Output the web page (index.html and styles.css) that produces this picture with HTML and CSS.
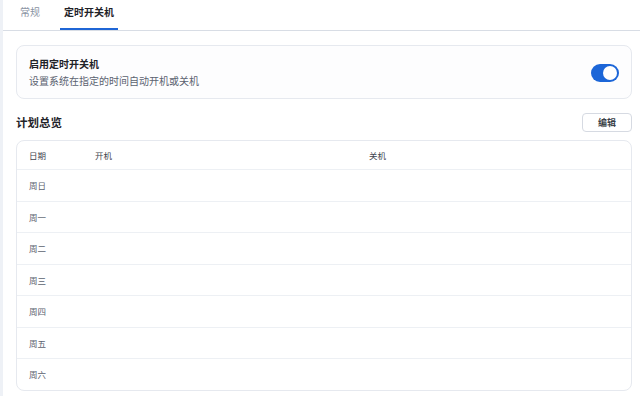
FILE: index.html
```html
<!DOCTYPE html>
<html lang="zh-CN">
<head>
  <meta charset="UTF-8" />
  <meta name="viewport" content="width=device-width, initial-scale=1.0"/>
  <title>定时开关机</title>
  <link rel="stylesheet" href="styles.css">
</head>
<body>
  <div class="page">
    <nav class="tabs">
      <span class="tab">常规</span>
      <span class="tab active">定时开关机</span>
    </nav>

    <main class="content">
      <section class="card">
        <div class="card-text">
          <div class="card-title">启用定时开关机</div>
          <div class="card-desc">设置系统在指定的时间自动开机或关机</div>
        </div>
        <span class="switch on"><span class="knob"></span></span>
      </section>

      <div class="section-head">
        <h2>计划总览</h2>
        <button class="btn">编辑</button>
      </div>

      <div class="table">
        <div class="row head">
          <span>日期</span><span>开机</span><span>关机</span>
        </div>
        <div class="row"><span>周日</span><span></span><span></span></div>
        <div class="row"><span>周一</span><span></span><span></span></div>
        <div class="row"><span>周二</span><span></span><span></span></div>
        <div class="row"><span>周三</span><span></span><span></span></div>
        <div class="row"><span>周四</span><span></span><span></span></div>
        <div class="row"><span>周五</span><span></span><span></span></div>
        <div class="row"><span>周六</span><span></span><span></span></div>
      </div>
    </main>
  </div>
</body>
</html>
```

FILE: styles.css
```css
* {
  box-sizing: border-box;
}
html, body {
  margin: 0;
  height: 100%;
}
body {
  font-family: "Noto Sans CJK SC", "Noto Sans", sans-serif;
  background: #fff;
  color: #1f2329;
}
.page {
  min-height: 100%;
  border-left: 3px solid #eef1f6;
}
.tabs {
  display: flex;
  gap: 16px;
  height: 31px;
  padding-left: 13px;
  border-bottom: 1px solid #d8dde5;
}
.tab {
  display: flex;
  align-items: center;
  padding: 0 4px 6px;
  font-size: 10px;
  color: #8a93a3;
  border-bottom: 2px solid transparent;
}
.tab.active {
  color: #1f2329;
  font-weight: 600;
  border-bottom-color: #1f66d6;
}
.content {
  padding: 14px 8px 0 13px;
}
.card {
  display: flex;
  align-items: center;
  justify-content: space-between;
  padding: 11px 12px 10px;
  border: 1px solid #e6e9ef;
  border-radius: 8px;
  background: #fdfdfe;
}
.card-title {
  font-size: 10px;
  line-height: 13px;
  font-weight: 600;
}
.card-desc {
  margin-top: 4px;
  font-size: 10px;
  line-height: 14px;
  color: #5b6270;
}
.switch {
  display: flex;
  align-items: center;
  width: 28px;
  height: 18px;
  padding: 2px;
  border-radius: 9px;
  background: #1c66d8;
  justify-content: flex-end;
}
.knob {
  width: 14px;
  height: 14px;
  border-radius: 50%;
  background: #fff;
}
.section-head {
  display: flex;
  align-items: center;
  justify-content: space-between;
  margin-top: 13px;
  height: 20px;
}
.section-head h2 {
  margin: 0;
  font-size: 11.5px;
  font-weight: 600;
}
.btn {
  width: 50px;
  height: 19px;
  padding: 0;
  font-family: inherit;
  font-size: 9px;
  font-weight: 600;
  color: #3a3f48;
  background: #fff;
  border: 1px solid #d6dae2;
  border-radius: 4px;
}
.table {
  margin-top: 8px;
  border: 1px solid #e6e9ef;
  border-radius: 8px;
  overflow: hidden;
}
.row {
  display: grid;
  grid-template-columns: 66px 1fr 1fr;
  align-items: center;
  height: 31.5px;
  font-size: 8.5px;
  color: #5c6370;
  border-top: 1px solid #edf0f4;
}
.row.head {
  height: 28px;
  border-top: none;
  color: #3f4550;
}
.row span {
  padding-left: 12px;
}
```
